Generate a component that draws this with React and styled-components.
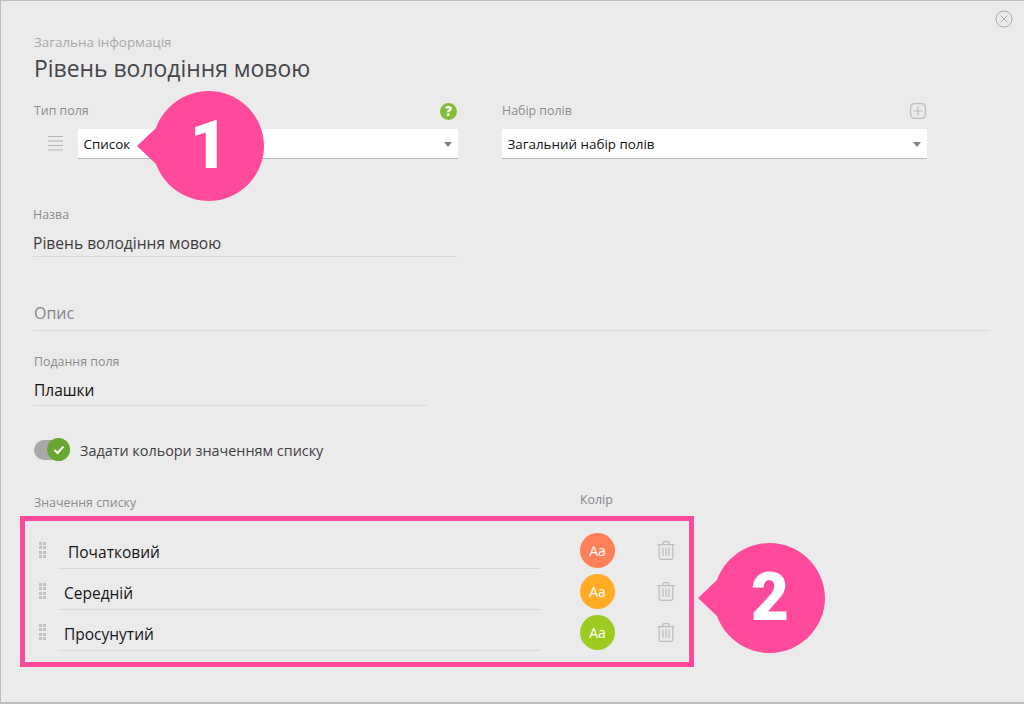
import React from 'react';
import styled, { createGlobalStyle } from 'styled-components';

const GlobalStyle = createGlobalStyle`
  html, body {
    margin: 0;
    padding: 0;
    background: #ebebeb;
  }
  * {
    box-sizing: border-box;
  }
`;

const Modal = styled.div`
  position: relative;
  width: 1024px;
  height: 704px;
  overflow: hidden;
  padding: 33px 34px 0 33px;
  background: #ebebeb;
  border: 1px solid #bdbdbd;
  border-width: 1px 0 2px 1px;
  font-family: 'Open Sans', 'Noto Sans', sans-serif;
`;

const CloseButton = styled.div`
  position: absolute;
  top: 9px;
  right: 11px;
  width: 18px;
  height: 18px;
  color: #adadad;
  display: flex;
`;

const Subtitle = styled.div`
  font-size: 13.4px;
  line-height: 17px;
  color: #a9a9a9;
`;

const Title = styled.h1`
  margin: 3px 0 0;
  font-size: 22.9px;
  line-height: 30px;
  font-weight: 400;
  color: #45464a;
`;

const SelectRow = styled.div`
  display: flex;
  margin-top: 18px;
`;

const SelectGroup = styled.div`
  width: ${(p) => p.$width}px;
  margin-right: ${(p) => p.$gap || 0}px;
`;

const LabelRow = styled.div`
  display: flex;
  justify-content: space-between;
  align-items: center;
  height: 18px;
  padding-right: 1px;
`;

const Label = styled.div`
  font-size: 12.4px;
  line-height: 18px;
  color: #8b8b8b;
`;

const SelectLine = styled.div`
  display: flex;
  align-items: center;
  margin-top: 9px;
`;

const DragLines = styled.div`
  width: 15px;
  height: 15px;
  margin: -2px 15px 0 14px;
  color: #b5b5b5;
  display: flex;
`;

const Select = styled.div`
  flex: 1;
  height: 30px;
  display: flex;
  align-items: center;
  justify-content: space-between;
  padding: 1px 6px 0 5.5px;
  background: #fff;
  border-bottom: 1px solid #b9b9b9;
  font-size: 13.4px;
  color: #111;
`;

const Caret = styled.span`
  width: 0;
  height: 0;
  border-left: 4px solid transparent;
  border-right: 4px solid transparent;
  border-top: 5px solid #808080;
`;

const Field = styled.div`
  width: ${(p) => p.$width}px;
  margin: ${(p) => p.$top}px 0 0 -1px;
`;

const FieldValue = styled.div`
  height: ${(p) => p.$height}px;
  padding: ${(p) => p.$pad}px 0 0 ${(p) => p.$left || 0}px;
  font-size: ${(p) => p.$size}px;
  line-height: 22px;
  color: ${(p) => p.$color || '#3c3d40'};
  border-bottom: 1px solid #d9d9d9;
`;

const FieldLabel = styled(Label)`
  padding-left: ${(p) => p.$left || 0}px;
`;

const ToggleRow = styled.div`
  display: flex;
  align-items: center;
  margin-top: 32px;
  height: 24px;
`;

const Toggle = styled.div`
  position: relative;
  width: 36px;
  height: 20px;
  border-radius: 10px;
  background: #a9a9a9;
`;

const ToggleKnob = styled.div`
  position: absolute;
  top: -2px;
  right: 0;
  width: 23px;
  height: 23px;
  border-radius: 50%;
  background: #69a82f;
  display: flex;
  align-items: center;
  justify-content: center;
`;

const ToggleText = styled.div`
  margin-left: 10px;
  font-size: 14.4px;
  color: #3f4043;
`;

const ValuesHead = styled.div`
  display: flex;
  align-items: flex-end;
  margin-top: 30px;
  height: 20px;
`;

const ValuesLabel = styled(Label)`
  width: 546px;
`;

const ColorLabel = styled(Label)`
  position: relative;
  top: -3px;
  color: #84858e;
`;

const Frame = styled.div`
  width: 674px;
  height: 151px;
  margin: 4px 0 0 -14px;
  padding: 10px 14px 0 14px;
  border: 5px solid #ff4a9b;
`;

const ValueRow = styled.div`
  display: flex;
  align-items: center;
  height: 41px;
`;

const Grip = styled.div`
  width: 7px;
  height: 16px;
  margin: -3px 12px 0 0;
  display: grid;
  grid-template-columns: 3px 3px;
  grid-auto-rows: 3px;
  gap: 1.33px 1px;
  span {
    background: #c2c2c2;
  }
`;

const ValueInput = styled.div`
  width: 482px;
  height: 36px;
  margin-bottom: 1px;
  padding: 8px 0 0 ${(p) => p.$indent}px;
  font-size: 15.5px;
  line-height: 22px;
  color: #15161a;
  border-bottom: 1px solid #d9d9d9;
`;

const Swatch = styled.div`
  width: 35px;
  height: 35px;
  margin: -2px 0 0 40px;
  border-radius: 50%;
  background: ${(p) => p.$color};
  color: #fff;
  font-size: 14px;
  display: flex;
  align-items: center;
  justify-content: center;
`;

const TrashWrap = styled.div`
  margin: -3px 0 0 42px;
  width: 18px;
  height: 19px;
  color: #bdbdbd;
  display: flex;
`;

const Callout = styled.div`
  position: absolute;
  left: ${(p) => p.$x}px;
  top: ${(p) => p.$y}px;
  width: 127px;
  height: 110px;
`;

const CalloutNumber = styled.span`
  position: absolute;
  top: 50%;
  left: 17px;
  width: 110px;
  transform: translateY(-50%);
  text-align: center;
  font-family: 'Roboto', 'Open Sans', sans-serif;
  font-size: 66px;
  font-weight: 900;
  line-height: 1;
  color: #fff;
`;

const rows = [
  { name: 'Початковий', indent: 10, color: '#ff7f5b' },
  { name: 'Середній', indent: 6, color: '#ffac24' },
  { name: 'Просунутий', indent: 6, color: '#9ecb22' },
];

const TrashIcon = () => (
  <svg width="18" height="19" viewBox="0 0 18 19" fill="none" stroke="currentColor" strokeWidth="1.2">
    <path d="M0.5 3.6h17M6 3.4V1.6c0-.6.4-1 1-1h4c.6 0 1 .4 1 1v1.8" />
    <path d="M2.2 4v12.6c0 1 .7 1.8 1.8 1.8h10c1.1 0 1.8-.8 1.8-1.8V4" />
    <path d="M6 6.5v8.5M9 6.5v8.5M12 6.5v8.5" />
  </svg>
);

const Bubble = ({ x, y, number }) => (
  <Callout $x={x} $y={y}>
    <svg width="127" height="110" viewBox="0 0 127 110">
      <path
        d="M0 55 L19 37 C27 15 48 0 72 0 C102 0 127 25 127 55 C127 85 102 110 72 110 C48 110 27 95 19 73 Z"
        fill="#ff4a9b"
      />
    </svg>
    <CalloutNumber>{number}</CalloutNumber>
  </Callout>
);

export default function App() {
  return (
    <>
      <GlobalStyle />
      <Modal>
        <CloseButton>
          <svg width="18" height="18" viewBox="0 0 18 18" fill="none" stroke="currentColor" strokeWidth="1">
            <circle cx="9" cy="9" r="8" />
            <path d="M5.5 5.5l7 7M12.5 5.5l-7 7" />
          </svg>
        </CloseButton>

        <Subtitle>Загальна інформація</Subtitle>
        <Title>Рівень володіння мовою</Title>

        <SelectRow>
          <SelectGroup $width={424} $gap={44}>
            <LabelRow>
              <Label>Тип поля</Label>
              <svg width="17" height="17" viewBox="0 0 18 18">
                <circle cx="9" cy="9" r="9" fill="#84bd3c" />
                <text x="9" y="14" textAnchor="middle" fontSize="14" fontWeight="800" fontFamily="Open Sans" fill="#fff">?</text>
              </svg>
            </LabelRow>
            <SelectLine>
              <DragLines>
                <svg width="15" height="15" viewBox="0 0 15 15" stroke="currentColor" strokeWidth="1">
                  <path d="M0 .5h15M0 5h15M0 9.5h15M0 14h15" />
                </svg>
              </DragLines>
              <Select>
                Список
                <Caret />
              </Select>
            </SelectLine>
          </SelectGroup>

          <SelectGroup $width={425}>
            <LabelRow>
              <Label>Набір полів</Label>
              <svg width="16" height="16" viewBox="0 0 16 16" fill="none" stroke="#bcbcbc" strokeWidth="1.2">
                <rect x=".6" y=".6" width="14.8" height="14.8" rx="4" />
                <path d="M8 3.5v9M3.5 8h9" />
              </svg>
            </LabelRow>
            <SelectLine>
              <Select>
                Загальний набір полів
                <Caret />
              </Select>
            </SelectLine>
          </SelectGroup>
        </SelectRow>

        <Field $width={424} $top={47}>
          <Label>Назва</Label>
          <FieldValue $height={33} $pad={8} $size={15.6}>Рівень володіння мовою</FieldValue>
        </Field>

        <Field $width={957} $top={41}>
          <FieldValue $height={33} $pad={4} $size={16} $left={1} $color="#84858e">Опис</FieldValue>
        </Field>

        <Field $width={394} $top={22}>
          <FieldLabel $left={1}>Подання поля</FieldLabel>
          <FieldValue $height={35} $pad={8} $size={15.5} $left={1} $color="#111">Плашки</FieldValue>
        </Field>

        <ToggleRow>
          <Toggle>
            <ToggleKnob>
              <svg width="12" height="10" viewBox="0 0 12 10" fill="none" stroke="#fff" strokeWidth="2">
                <path d="M1.5 5l3 3 6-6.5" />
              </svg>
            </ToggleKnob>
          </Toggle>
          <ToggleText>Задати кольори значенням списку</ToggleText>
        </ToggleRow>

        <ValuesHead>
          <ValuesLabel>Значення списку</ValuesLabel>
          <ColorLabel>Колір</ColorLabel>
        </ValuesHead>

        <Frame>
          {rows.map((row) => (
            <ValueRow key={row.name}>
              <Grip>
                {Array.from({ length: 8 }).map((_, i) => (
                  <span key={i} />
                ))}
              </Grip>
              <ValueInput $indent={row.indent}>{row.name}</ValueInput>
              <Swatch $color={row.color}>Aa</Swatch>
              <TrashWrap>
                <TrashIcon />
              </TrashWrap>
            </ValueRow>
          ))}
        </Frame>

        <Bubble x={136} y={90} number="1" />
        <Bubble x={697} y={542} number="2" />
      </Modal>
    </>
  );
}
